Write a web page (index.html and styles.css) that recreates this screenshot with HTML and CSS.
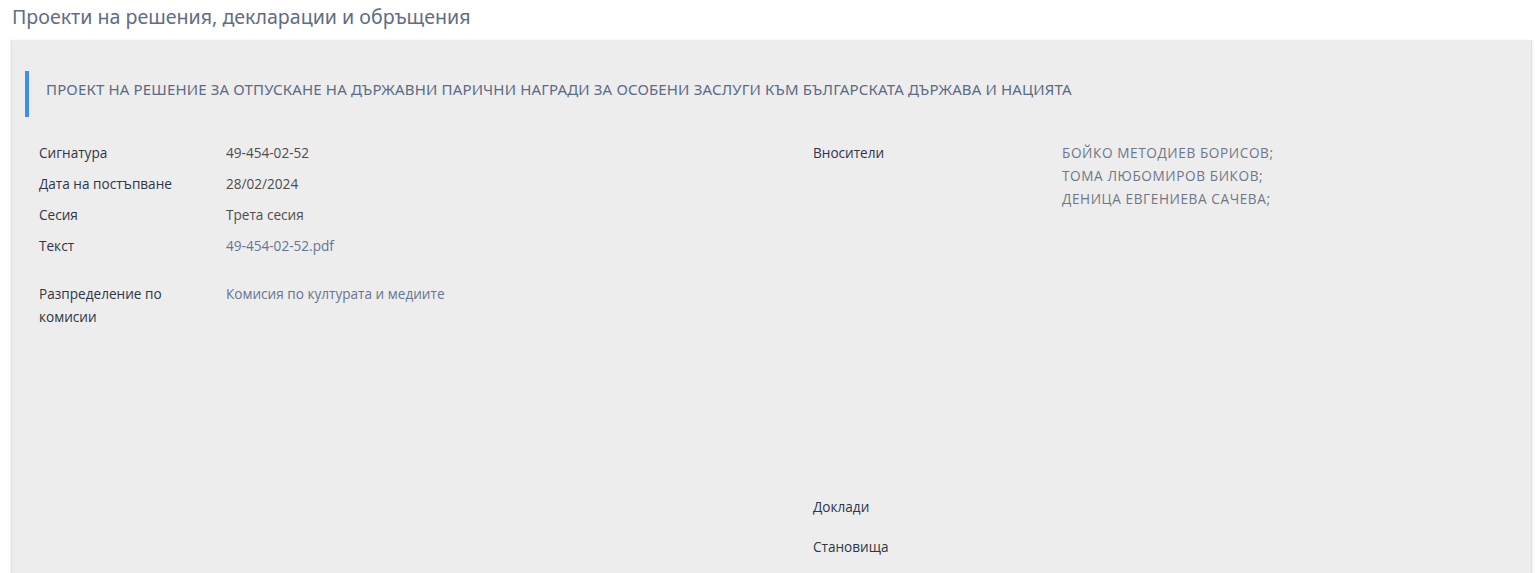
FILE: index.html
```html
<!DOCTYPE html>
<html lang="bg">
<head>
    <meta charset="UTF-8">
    <meta name="viewport" content="width=device-width, initial-scale=1.0">
    <title>Проекти на решения, декларации и обръщения</title>
    <link rel="stylesheet" href="styles.css">
</head>
<body>
    <h2 class="page-title">Проекти на решения, декларации и обръщения</h2>

    <div class="panel">
        <div class="bill-title">
            ПРОЕКТ НА РЕШЕНИЕ ЗА ОТПУСКАНЕ НА ДЪРЖАВНИ ПАРИЧНИ НАГРАДИ ЗА ОСОБЕНИ ЗАСЛУГИ КЪМ БЪЛГАРСКАТА ДЪРЖАВА И НАЦИЯТА
        </div>

        <div class="details">
            <div class="col col-left">
                <div class="row">
                    <div class="label">Сигнатура</div>
                    <div class="value">49-454-02-52</div>
                </div>
                <div class="row">
                    <div class="label">Дата на постъпване</div>
                    <div class="value">28/02/2024</div>
                </div>
                <div class="row">
                    <div class="label">Сесия</div>
                    <div class="value">Трета сесия</div>
                </div>
                <div class="row">
                    <div class="label">Текст</div>
                    <div class="value"><a href="#">49-454-02-52.pdf</a></div>
                </div>
                <div class="row row-spaced">
                    <div class="label">Разпределение по комисии</div>
                    <div class="value"><a href="#">Комисия по културата и медиите</a></div>
                </div>
            </div>

            <div class="col col-right">
                <div class="row row-authors">
                    <div class="label">Вносители</div>
                    <div class="value names">
                        <a href="#">БОЙКО МЕТОДИЕВ БОРИСОВ;</a><br>
                        <a href="#">ТОМА ЛЮБОМИРОВ БИКОВ;</a><br>
                        <a href="#">ДЕНИЦА ЕВГЕНИЕВА САЧЕВА;</a>
                    </div>
                </div>
                <div class="row">
                    <div class="label">Доклади</div>
                    <div class="value"></div>
                </div>
                <div class="row row-loose">
                    <div class="label">Становища</div>
                    <div class="value"></div>
                </div>
            </div>
        </div>
    </div>
</body>
</html>
```

FILE: styles.css
```css
body {
    font-family: "Noto Sans", "Open Sans", sans-serif;
    background-color: #fff;
    margin: 0;
    padding: 0 3px 0 11px;
}
.page-title {
    margin: 0;
    padding: 3px 0 0 1px;
    height: 37px;
    font-size: 19.6px;
    font-weight: 400;
    color: #5f6d85;
}
.panel {
    background-color: #ededed;
    padding: 31px 13px 40px;
    min-height: 600px;
    box-shadow: 0 1px 3px rgba(0, 0, 0, 0.12);
    border-left: 1px solid #e2e2e2;
    border-right: 1px solid #e2e2e2;
}
.bill-title {
    border-left: 4px solid #3d8fe8;
    height: 46px;
    box-sizing: border-box;
    display: flex;
    align-items: center;
    padding: 0 0 11px 17px;
    font-size: 15px;
    letter-spacing: 0.15px;
    color: #5b6b86;
}
.details {
    display: flex;
    padding-top: 20px;
    font-family: "Open Sans", "Noto Sans", sans-serif;
    font-size: 13.6px;
    line-height: 23px;
}
.col-left {
    width: 774px;
    padding-left: 14px;
}
.col-right {
    flex: 1;
}
.row {
    display: flex;
    padding: 4px 0;
}
.col-left .label {
    width: 187px;
    padding-right: 28px;
    box-sizing: border-box;
}
.col-right .label {
    width: 249px;
}
.label {
    color: #2e3646;
}
.value {
    color: #4d4d4d;
}
.value a {
    color: #66758f;
    text-decoration: none;
}
.names a {
    color: #6e7789;
    letter-spacing: 0.6px;
}
.row-spaced {
    margin-top: 17px;
}
.row-authors {
    min-height: 346px;
}
.row-loose {
    margin-top: 9px;
}
```
